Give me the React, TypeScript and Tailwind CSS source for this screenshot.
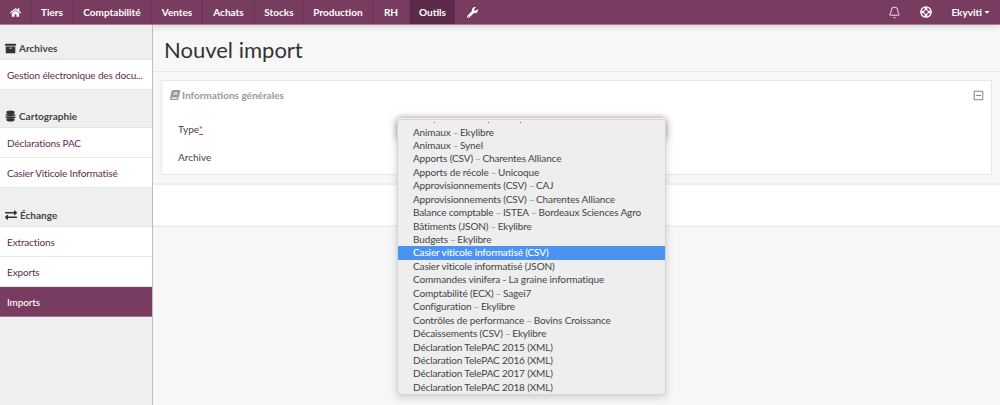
import { FaArchive, FaBook, FaCaretDown, FaExchangeAlt, FaHome, FaRegMinusSquare, FaWrench } from "react-icons/fa"
import { Bell } from "lucide-react"

const navItems = [
    { label: "Tiers", width: "w-[41px]" },
    { label: "Comptabilité", width: "w-[79px]" },
    { label: "Ventes", width: "w-[51px]" },
    { label: "Achats", width: "w-[52px]" },
    { label: "Stocks", width: "w-[49px]" },
    { label: "Production", width: "w-[69px]" },
    { label: "RH", width: "w-[37px]" },
]

const options = [
    ["Animaux", "Ekylibre"],
    ["Animaux", "Synel"],
    ["Apports (CSV)", "Charentes Alliance"],
    ["Apports de récole", "Unicoque"],
    ["Approvisionnements (CSV)", "CAJ"],
    ["Approvisionnements (CSV)", "Charentes Alliance"],
    ["Balance comptable", "ISTEA", "Bordeaux Sciences Agro"],
    ["Bâtiments (JSON)", "Ekylibre"],
    ["Budgets", "Ekylibre"],
    ["Casier viticole informatisé (CSV)"],
    ["Casier viticole informatisé (JSON)"],
    ["Commandes vinifera - La graine informatique"],
    ["Comptabilité (ECX)", "Sagei7"],
    ["Configuration", "Ekylibre"],
    ["Contrôles de performance", "Bovins Croissance"],
    ["Décaissements (CSV)", "Ekylibre"],
    ["Déclaration TelePAC 2015 (XML)"],
    ["Déclaration TelePAC 2016 (XML)"],
    ["Déclaration TelePAC 2017 (XML)"],
    ["Déclaration TelePAC 2018 (XML)"],
]

function LayersIcon() {
    return (
        <svg viewBox="0 0 12 13" className="w-[11px] h-[12px] text-[#333]" fill="currentColor">
            <ellipse cx="6" cy="2.6" rx="4.6" ry="2" />
            <ellipse cx="6" cy="5.4" rx="5.6" ry="1.1" />
            <ellipse cx="6" cy="8" rx="5.6" ry="1.1" />
            <ellipse cx="6" cy="10.6" rx="4.6" ry="1.9" />
        </svg>
    )
}

function LifeRingIcon() {
    return (
        <svg viewBox="0 0 12 12" className="w-[12px] h-[12px] ml-[19px]" fill="none" stroke="currentColor">
            <circle cx="6" cy="6" r="5.2" strokeWidth="1.3" />
            <circle cx="6" cy="6" r="2.3" strokeWidth="1" />
            <path d="M6 1v2.8M6 8.2V11M1 6h2.8M8.2 6H11" strokeWidth="2.6" />
        </svg>
    )
}

function SideHeader({ icon, label, className }: { icon: React.ReactNode; label: string; className: string }) {
    return (
        <div className={`flex items-center gap-[3px] pl-[5px] text-[10px] font-bold text-[#444] border-b border-[#e4e4e4] ${className}`}>
            {icon}
            <span>{label}</span>
        </div>
    )
}

function SideLink({ label, active }: { label: string; active?: boolean }) {
    return (
        <div className={`h-[30px] flex items-center pl-[7px] pt-[1px] text-[10px] tracking-[-0.15px] border-b whitespace-nowrap ${active ? "bg-[#783c61] text-white border-[#a4759a] font-medium" : "bg-white text-[#5e2c4c] border-[#e8e8e8]"}`}>
            {label}
        </div>
    )
}

export default function App() {
    return (
        <div className="relative h-[405px] w-[1000px] overflow-hidden bg-[#f7f7f7] font-['Lato','Open_Sans',sans-serif]">
            {/* Top navigation */}
            <div className="h-[25px] flex items-stretch bg-[#783c61] text-white text-[10px] font-bold border-b border-[#a87d99] shadow-[0_2px_6px_rgba(0,0,0,0.12)]">
                <div className="w-[32px] flex items-center justify-center border-r border-[#6e3557]">
                    <FaHome className="w-[11px] h-[11px]" />
                </div>
                {navItems.map((item) => (
                    <div key={item.label} className={`${item.width} flex items-center justify-center border-r border-[#6e3557]`}>
                        {item.label}
                    </div>
                ))}
                <div className="w-[45px] flex items-center justify-center bg-[#5d2b49]">Outils</div>
                <div className="w-[34px] flex items-center justify-center">
                    <FaWrench className="w-[11px] h-[11px]" />
                </div>
                <div className="ml-auto flex items-center pr-[9px]">
                    <Bell className="w-[13px] h-[13px]" strokeWidth={1.6} />
                    <LifeRingIcon />
                    <span className="ml-[19px]">Ekyviti</span>
                    <FaCaretDown className="w-[8px] h-[8px] ml-[1px]" />
                </div>
            </div>

            <div className="flex h-[380px]">
                {/* Sidebar */}
                <div className="w-[153px] shrink-0 bg-[#efefef] border-r border-[#bdbdbd]">
                    <SideHeader icon={<FaArchive className="w-[11px] h-[11px] text-[#333]" />} label="Archives" className="h-[35px] pt-[12px]" />
                    <SideLink label="Gestion électronique des docu..." />
                    <SideHeader icon={<LayersIcon />} label="Cartographie" className="h-[38px] pt-[15px]" />
                    <SideLink label="Déclarations PAC" />
                    <SideLink label="Casier Viticole Informatisé" />
                    <SideHeader icon={<FaExchangeAlt className="w-[12px] h-[12px] text-[#333]" />} label="Échange" className="h-[39px] pt-[16px]" />
                    <SideLink label="Extractions" />
                    <SideLink label="Exports" />
                    <SideLink label="Imports" active />
                </div>

                {/* Main */}
                <div className="flex-1 min-w-0">
                    <div className="h-[47px] flex items-center pl-[11px] pt-[2px] text-[22px] text-[#333] border-b border-[#e9e9e9]">
                        Nouvel import
                    </div>
                    <div className="h-[113px] pt-[8px] px-[8px] border-b-2 border-[#eeeeee]">
                        <div className="h-[95px] bg-white border border-[#e8e8e8]">
                            <div className="flex items-center justify-between h-[28px] pl-[8px] pr-[7px] text-[#999] text-[10px] font-bold">
                                <div className="flex items-center gap-[2px]">
                                    <FaBook className="w-[10px] h-[10px] -skew-x-12" />
                                    <span>Informations générales</span>
                                </div>
                                <FaRegMinusSquare className="w-[11px] h-[11px] text-[#888]" />
                            </div>
                            <div className="pl-[16px] text-[10px] text-[#444]">
                                <div className="h-[28px] flex items-center mt-[6px]">
                                    <div className="w-[219px]">
                                        Type<span className="text-[#e03030] underline">*</span>
                                    </div>
                                    {/* Focused select, hidden behind its open menu */}
                                    <div className="w-[269px] h-[22px] rounded-[4px] bg-white shadow-[0_0_7px_rgba(120,60,97,0.55)]" />
                                </div>
                                <div className="h-[28px] flex items-center pt-[1px]">Archive</div>
                            </div>
                        </div>
                    </div>
                    <div className="h-[42px] bg-white border-b-2 border-[#eeeeee]" />
                </div>
            </div>

            {/* Open select menu */}
            <div className="absolute left-[397px] top-[119px] w-[269px] h-[276px] overflow-hidden rounded-[4px] bg-[#eeeeee] border border-[#d4d4d4] shadow-[0_2px_9px_rgba(0,0,0,0.18)] text-[10px] tracking-[-0.13px] text-[#444] pt-[5.5px] leading-[13.45px]">
                {/* Descenders of the option scrolled out above */}
                <span className="absolute left-[36px] top-[2px] w-[1px] h-[1px] bg-[#666]" />
                <span className="absolute left-[90px] top-[2px] w-[1px] h-[1px] bg-[#666]" />
                <span className="absolute left-[122px] top-[2px] w-[1px] h-[1px] bg-[#666]" />
                {options.map((parts) => {
                    const isActive = parts[0] === "Casier viticole informatisé (CSV)"
                    return (
                        <div key={parts.join()} className={`h-[13.45px] pl-[15px] whitespace-nowrap ${isActive ? "bg-[#4a94f0] text-white font-medium" : ""}`}>
                            {parts.map((part, i) => (
                                <span key={part}>
                                    {i > 0 && <span className="text-[#999] tracking-[-0.5px]"> – </span>}
                                    {part}
                                </span>
                            ))}
                        </div>
                    )
                })}
            </div>
        </div>
    )
}
